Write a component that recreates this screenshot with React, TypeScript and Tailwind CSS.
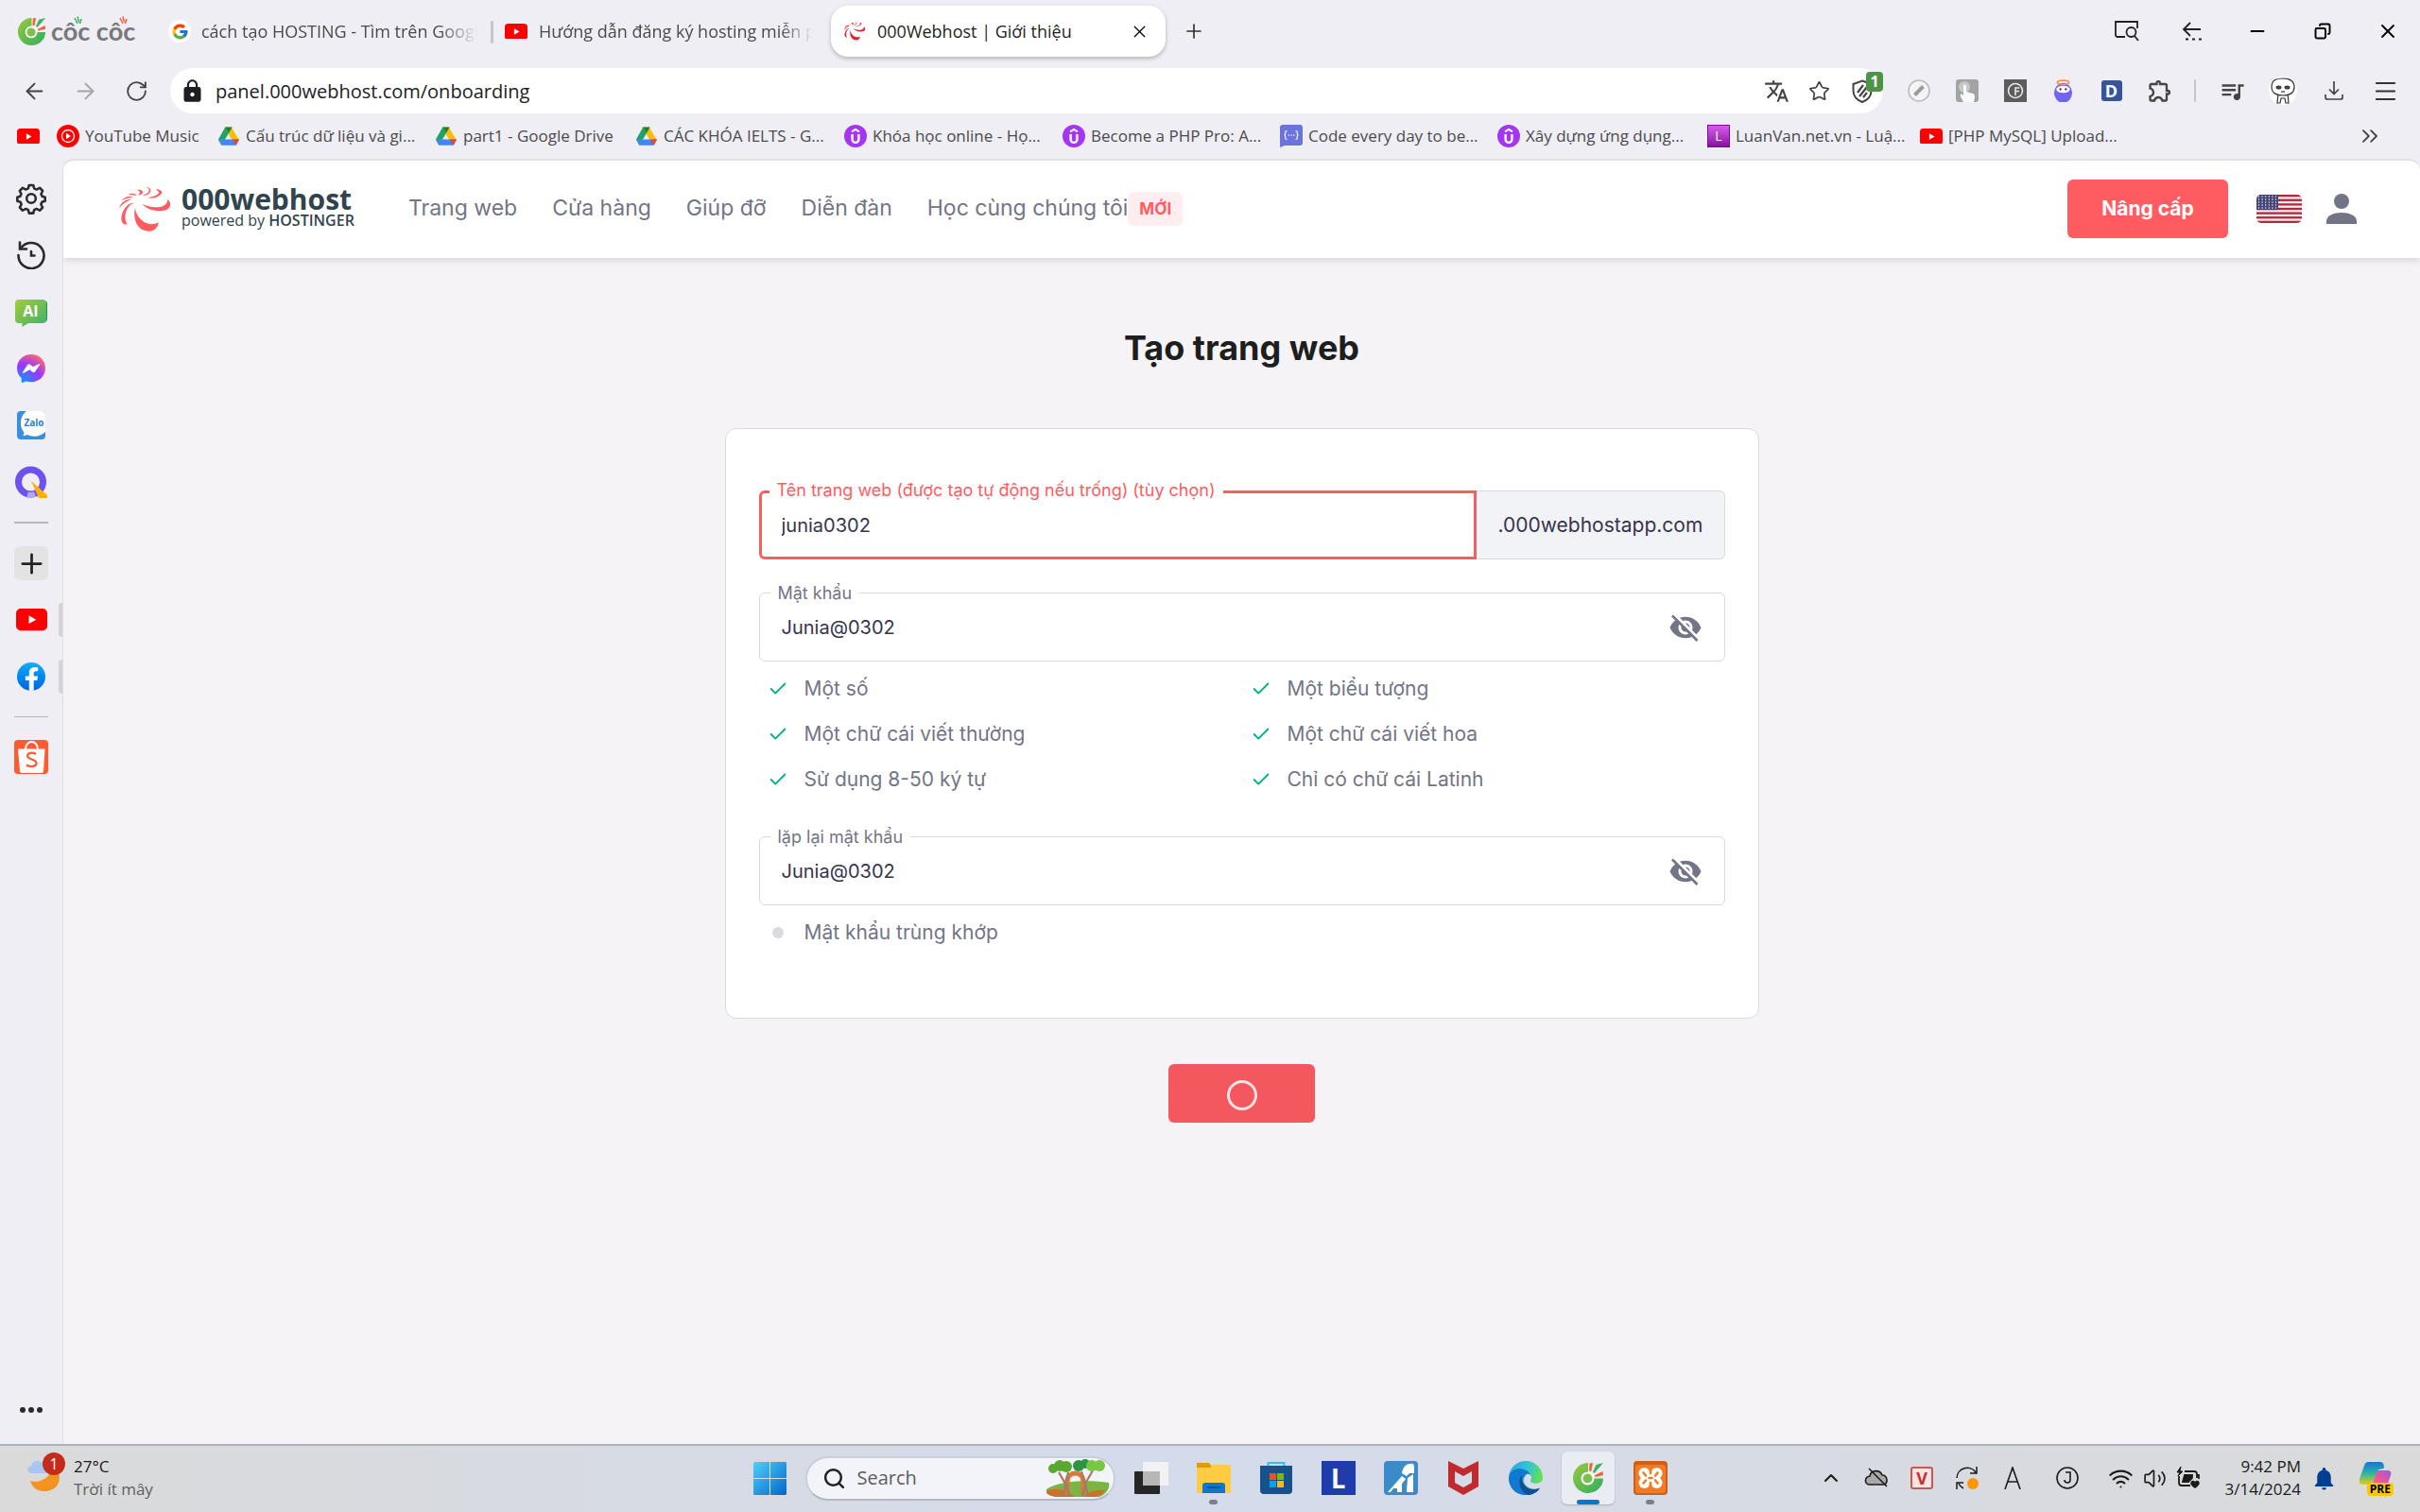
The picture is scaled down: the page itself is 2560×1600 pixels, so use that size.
import React from "react";
import {
  ArrowLeft,
  ArrowRight,
  RotateCw,
  Plus,
  X,
  Minus,
  Star,
  Menu,
  ChevronsRight,
  ChevronUp,
  Search,
  Volume2,
  Wifi,
  Check,
  Copy,
} from "lucide-react";
import { FcGoogle } from "react-icons/fc";
import { FaFacebookF } from "react-icons/fa";
import {
  MdVisibilityOff,
  MdTranslate,
  MdLock,
  MdNotifications,
  MdOutlineQueueMusic,
  MdOutlineExtension,
} from "react-icons/md";

const YouTube = ({ className = "w-6" }: { className?: string }) => (
  <svg viewBox="0 0 34 24" className={className} aria-hidden="true">
    <rect width="34" height="24" rx="5" fill="#ff0000" />
    <path d="M14 7.500v9l8-4.500z" fill="#fff" />
  </svg>
);

const YouTubeMusic = () => (
  <svg viewBox="0 0 24 24" className="size-6 shrink-0" aria-hidden="true">
    <circle cx="12" cy="12" r="12" fill="#ff0000" />
    <circle cx="12" cy="12" r="6.500" fill="none" stroke="#fff" strokeWidth="1.300" />
    <path d="M10 8.700v6.600l5-3.300z" fill="#fff" />
  </svg>
);

const Drive = () => (
  <svg viewBox="0 0 24 24" className="size-6 shrink-0" aria-hidden="true">
    <path d="M8.300 2.500h7.400L24 16.500h-7.400z" fill="#fbbc04" transform="translate(-1 0)" />
    <path d="M8.300 2.500 1 15.500l3.400 6.300 7.600-13z" fill="#1ea362" />
    <path d="M8.300 2.500h7.400L12 8.800z" fill="#188038" />
    <path d="M1 15.500h14.800l-3.600 6.300H4.400z" fill="#4285f4" />
    <path d="M15.600 15.500H23l-3.400 6.300h-8z" fill="#4285f4" />
    <path d="M16 15.500h7l-3.400 6.300z" fill="#ea4335" />
  </svg>
);

const Udemy = () => (
  <svg viewBox="0 0 24 24" className="size-6 shrink-0" aria-hidden="true">
    <circle cx="12" cy="12" r="12" fill="#a435f0" />
    <path d="M8 7.300 12 5l4 2.300" fill="none" stroke="#fff" strokeWidth="2" />
    <path d="M8.600 10v5.500a3.400 3.400 0 0 0 6.800 0V10" fill="none" stroke="#fff" strokeWidth="2.400" />
  </svg>
);

const CodeBubble = () => (
  <svg viewBox="0 0 24 24" className="size-6 shrink-0" aria-hidden="true">
    <path d="M3 0h18a3 3 0 0 1 3 3v16a3 3 0 0 1-3 3H5l-5 2V3a3 3 0 0 1 3-3z" fill="#6a74dc" />
    <path
      d="M7.500 6.500c-2 0-1.700 1-1.700 2.500 0 1-.3 2-1.300 2 1 0 1.300 1 1.300 2 0 1.500-.3 2.500 1.700 2.500M16.500 6.500c2 0 1.700 1 1.700 2.500 0 1 .3 2 1.300 2-1 0-1.300 1-1.300 2 0 1.500.3 2.500-1.700 2.500"
      fill="none"
      stroke="#fff"
      strokeWidth="1.200"
    />
    <path d="M8.700 10.400h1.300v1.300H8.700zM11.400 10.400h1.300v1.300h-1.300zM14 10.400h1.300v1.300H14z" fill="#fff" />
  </svg>
);

const Swirl = ({ className, fill }: { className: string; fill: string }) => (
  <svg viewBox="14 20 178 156" className={className} fill={fill} aria-hidden="true">
    <path d="M70 95C62 130 75 172 118 172C135 172 145 158 148 142C135 152 112 150 98 140C80 127 72 112 70 95Z" />
    <path d="M94 82C110 92 140 96 158 90C170 86 178 78 177 66C190 76 190 96 172 102C145 108 110 105 94 82Z" />
    <path d="M110 60C125 62 145 52 148 46C150 41 144 37 138 33C152 33 160 39 158 45C154 56 130 68 110 60Z" />
    <path d="M94 52C105 52 114 45 116 38C117 32 112 28 107 27C118 26 124 34 120 42C115 52 104 57 94 52Z" />
    <path d="M80 52C88 48 88 40 76 36C88 33 97 39 95 45C92 52 86 54 80 52Z" />
    <path d="M46 53C55 45 70 45 76 55C66 51 56 51 46 53Z" />
    <path d="M24 72C34 58 50 54 64 60C48 62 36 64 24 72Z" />
    <path d="M18 96C22 76 40 66 58 66C40 74 28 82 18 96Z" />
    <path d="M68 78C48 84 38 105 37 125C37 138 42 146 44 149C26 152 22 135 26 118C32 95 48 78 68 78Z" />
  </svg>
);

const CocCocMark = ({ className }: { className: string }) => (
  <svg viewBox="0 0 34 34" className={className} aria-hidden="true">
    <defs>
      <linearGradient id="coccoc" x1="0" y1="0" x2="1" y2="1">
        <stop offset="0" stopColor="#9ac83c" />
        <stop offset="1" stopColor="#2fae62" />
      </linearGradient>
    </defs>
    <path d="M17 1A16 16 0 1 0 33 17.500L23 17.500A6.500 6.500 0 1 1 17 11Z" fill="url(#coccoc)" />
    <circle cx="16.500" cy="17.500" r="7" fill="#fff" />
    <circle cx="16.500" cy="17.500" r="5" fill="#7dc04b" />
    <path d="M18.500 1.500 22 1l-1.700 9-2.300-.5z" fill="#f4623a" />
    <path d="M25.500 3 33 1 23.500 12l-1.500-1.500z" fill="#3cb15f" />
    <path d="m32.500 10 .5 4-8.500 2-.5-2z" fill="#f4623a" />
  </svg>
);

const Rays = ({ className }: { className: string }) => (
  <svg viewBox="0 0 9 9" className={className} fill="none" strokeWidth="1.500" aria-hidden="true">
    <path d="M1 2l3 6M4 .5l1.500 6M8 3 6.500 8" stroke="currentColor" />
  </svg>
);

type Mark = { icon: React.ReactNode; text: string; width: string };

const bookmarks: Mark[] = [
  { icon: <YouTubeMusic />, text: "YouTube Music", width: "w-[170px]" },
  { icon: <Drive />, text: "Cấu trúc dữ liệu và gi...", width: "w-[230px]" },
  { icon: <Drive />, text: "part1 - Google Drive", width: "w-[212px]" },
  { icon: <Drive />, text: "CÁC KHÓA IELTS - G...", width: "w-[221px]" },
  { icon: <Udemy />, text: "Khóa học online - Họ...", width: "w-[231px]" },
  { icon: <Udemy />, text: "Become a PHP Pro: A...", width: "w-[230px]" },
  { icon: <CodeBubble />, text: "Code every day to be...", width: "w-[230px]" },
  { icon: <Udemy />, text: "Xây dựng ứng dụng...", width: "w-[222px]" },
  {
    icon: (
      <span className="flex size-6 shrink-0 items-center justify-center border border-[#7d0b96] bg-linear-to-b from-[#d65bea] to-[#8a0aa3] text-sm text-white">
        L
      </span>
    ),
    text: "LuanVan.net.vn - Luậ...",
    width: "w-[225px]",
  },
  { icon: <YouTube className="w-6 shrink-0" />, text: "[PHP MySQL] Upload...", width: "w-[230px]" },
];

const Slot = ({ className, label, children }: { className: string; label: string; children?: React.ReactNode }) => (
  <button aria-label={label} className={`flex shrink-0 items-center justify-center ${className}`}>
    {children}
  </button>
);

function TabStrip() {
  return (
    <div className="flex h-[72px] items-start text-lg">
      <div className="flex h-[66px] w-[178px] shrink-0 items-center gap-[5px] pl-[18px]">
        <CocCocMark className="size-[31px]" />
        <span className="relative font-['Lato'] text-[27px] leading-8 font-bold whitespace-nowrap text-[#77787b]">
          côc côc
          <Rays className="absolute top-0 left-[24px] size-[9px] text-[#3cb15f]" />
          <Rays className="absolute top-0 right-[8px] size-[9px] text-[#f4623a]" />
        </span>
      </div>
      <div className="flex h-[66px] w-[341px] shrink-0 items-center gap-[11px]">
        <span className="flex size-6 items-center justify-center rounded-full bg-white">
          <FcGoogle size={19} />
        </span>
        <span className="w-[292px] overflow-hidden whitespace-nowrap text-[#4a4a4d] [mask-image:linear-gradient(to_right,black_86%,transparent)]">
          cách tạo HOSTING - Tìm trên Google
        </span>
      </div>
      <div className="mt-[22px] h-6 w-[3px] shrink-0 rounded bg-[#c6c6ca]" />
      <div className="flex h-[66px] w-[357px] shrink-0 items-center gap-3 pl-3">
        <YouTube className="w-6 shrink-0" />
        <span className="w-[290px] overflow-hidden whitespace-nowrap text-[#4a4a4d] [mask-image:linear-gradient(to_right,black_88%,transparent)]">
          Hướng dẫn đăng ký hosting miễn phí
        </span>
      </div>
      <div className="mt-[6px] flex h-[54px] w-[354px] shrink-0 items-center gap-3 rounded-[18px] bg-white pl-[13px] shadow-[0_2px_4px_rgba(0,0,0,0.25)]">
        <Swirl className="w-6" fill="#e0242f" />
        <span className="flex-1 text-[#1f1f22]">000Webhost | Giới thiệu</span>
        <Slot className="w-14" label="Close tab">
          <X size={21} strokeWidth={1.5} />
        </Slot>
      </div>
      <Slot className="h-[66px] w-[60px]" label="New tab">
        <Plus size={24} strokeWidth={1.7} color="#333" />
      </Slot>
      <div className="flex-1" />
      <Slot className="h-[66px] w-[69px]" label="Search tabs">
        <svg viewBox="0 0 26 22" className="w-[26px]" fill="none" stroke="#222" strokeWidth="1.800">
          <path d="M11 17H3a2 2 0 0 1-2-2V1h23v7" />
          <circle cx="17.500" cy="12" r="5" />
          <path d="m21 16 4 5" />
        </svg>
      </Slot>
      <Slot className="h-[66px] w-[69px]" label="Recently closed">
        <svg viewBox="0 0 22 20" className="w-[22px]" fill="none" stroke="#222" strokeWidth="1.800">
          <path d="M20 8H2M9 1 2 8l7 7" />
          <path d="M4 18.500h18" strokeDasharray="3 4" />
        </svg>
      </Slot>
      <Slot className="h-[66px] w-[69px]" label="Minimize">
        <Minus size={22} strokeWidth={2.2} />
      </Slot>
      <Slot className="h-[66px] w-[69px]" label="Restore">
        <Copy size={18} strokeWidth={2.6} className="rotate-90" />
      </Slot>
      <Slot className="h-[66px] w-[69px]" label="Close window">
        <X size={24} strokeWidth={1.8} />
      </Slot>
    </div>
  );
}

function Toolbar() {
  return (
    <div className="flex h-12 items-center pr-[10px] pl-[9px]">
      <Slot className="w-[54px]" label="Back">
        <ArrowLeft size={27} strokeWidth={1.7} color="#444" />
      </Slot>
      <Slot className="w-[54px]" label="Forward">
        <ArrowRight size={27} strokeWidth={1.7} color="#a5a5a8" />
      </Slot>
      <Slot className="w-[54px]" label="Reload">
        <RotateCw size={25} strokeWidth={1.8} color="#444" />
      </Slot>
      <div className="ml-[9px] flex h-12 flex-1 items-center rounded-full bg-white pl-[10px]">
        <MdLock size={27} className="text-[#1f1f22]" aria-hidden="true" />
        <label className="relative ml-[11px] flex h-full flex-1 items-center">
          <span className="sr-only">Address</span>
          <input
            className="h-full w-full bg-transparent text-xl text-[#222] outline-none"
            defaultValue="panel.000webhost.com/onboarding"
          />
        </label>
        <Slot className="w-[45px]" label="Translate">
          <MdTranslate size={27} color="#444" />
        </Slot>
        <Slot className="w-[45px]" label="Bookmark">
          <Star size={23} strokeWidth={1.8} color="#444" />
        </Slot>
        <Slot className="relative w-[45px]" label="Ad block">
          <svg viewBox="0 0 22 25" className="w-[22px]" fill="none" stroke="#444" strokeWidth="2">
            <path d="M11 1.500 20.500 5v7c0 6-4.500 10-9.500 12C6 22 1.500 18 1.500 12V5z" />
            <path d="m6 14 6-8M8 18l8-10M12 19l4-5" strokeWidth="2.200" />
          </svg>
          <span className="absolute -top-2 right-0 flex h-[21px] w-[18px] items-center justify-center rounded bg-[#4c9446] text-base font-bold text-white">
            1
          </span>
        </Slot>
      </div>
      <Slot className="ml-3 w-[51px]" label="Editor extension">
        <svg viewBox="0 0 24 24" className="size-6" fill="none" stroke="#b9b9bc" strokeWidth="1.500">
          <circle cx="12" cy="12" r="11" fill="#f4f4f6" />
          <path d="m7.500 16.500 9-9" stroke="#9b9b9e" strokeWidth="4" />
        </svg>
      </Slot>
      <Slot className="w-[51px]" label="Pointer extension">
        <svg viewBox="0 0 24 24" className="size-6">
          <rect width="24" height="24" rx="3" fill="#a3a3a3" />
          <circle cx="9" cy="8" r="6" fill="#c8c8c8" />
          <path d="M8 6c2-1 3 0 3 2v5l7 2c3 1 2 5 1 9H8c-1-3-4-6-3-8 1-1 2 0 3 1z" fill="#f7fafc" />
        </svg>
      </Slot>
      <Slot className="w-[51px]" label="Full page extension">
        <svg viewBox="0 0 24 24" className="size-6" fill="none" stroke="#e8e8e8" strokeWidth="1.600">
          <rect width="24" height="24" fill="#5c5c5c" stroke="none" />
          <circle cx="12" cy="12" r="7.500" />
          <path d="M16.500 9H12v8M12 12.500h4" />
        </svg>
      </Slot>
      <Slot className="w-[51px]" label="Buddy extension">
        <svg viewBox="0 0 22 26" className="w-[21px]">
          <ellipse cx="11" cy="15" rx="10" ry="11" fill="#7164f0" />
          <ellipse cx="11" cy="11" rx="7.500" ry="4" fill="#fff" />
          <circle cx="8" cy="11" r="1.200" fill="#333" />
          <circle cx="14" cy="11" r="1.200" fill="#333" />
          <ellipse cx="11" cy="3.500" rx="6.500" ry="2.300" fill="none" stroke="#f2913c" strokeWidth="1.800" />
        </svg>
      </Slot>
      <Slot className="w-[51px]" label="Dictionary extension">
        <span className="flex size-[22px] items-center justify-center rounded-[3px] bg-[#34549c] text-lg leading-none font-bold text-white">
          D
        </span>
      </Slot>
      <Slot className="w-[51px]" label="Extensions">
        <MdOutlineExtension size={28} color="#444" />
      </Slot>
      <div className="mx-[11px] h-6 w-0.5 rounded bg-[#c6c6ca]" />
      <Slot className="w-[54px]" label="Media">
        <MdOutlineQueueMusic size={29} color="#444" />
      </Slot>
      <Slot className="w-[54px]" label="Profile">
        <svg viewBox="0 0 30 30" className="size-[30px]" fill="#fff" stroke="#333" strokeWidth="1.200">
          <circle cx="15" cy="15" r="15" stroke="none" />
          <path d="M10 18 9 28h3l1-5h4l1 5h3l-1-10" />
          <path d="M3 11C3 3 9 2 15 2s12 2 12 9-6 9-12 9-12-2-12-9z" />
          <ellipse cx="10.500" cy="11.500" rx="2.400" ry="1.500" fill="#444" />
          <ellipse cx="19.500" cy="11.500" rx="2.400" ry="1.500" fill="#444" />
          <path d="M13 16h4" />
        </svg>
      </Slot>
      <Slot className="w-[54px]" label="Downloads">
        <svg viewBox="0 0 20 20" className="w-5" fill="none" stroke="#444" strokeWidth="1.700">
          <path d="M10 0v13M5 8.500l5 5 5-5M1 14v3a2 2 0 0 0 2 2h14a2 2 0 0 0 2-2v-3" />
        </svg>
      </Slot>
      <Slot className="w-[54px]" label="Menu">
        <Menu size={29} strokeWidth={1.6} color="#333" />
      </Slot>
    </div>
  );
}

function BookmarkBar() {
  return (
    <div className="flex h-12 items-center pl-[18px]">
      <a href="#youtube" aria-label="YouTube" className="mr-[18px] shrink-0">
        <YouTube className="w-6" />
      </a>
      {bookmarks.map((b) => (
        <a
          key={b.text}
          href="#bookmark"
          className={`flex shrink-0 items-center gap-[6px] whitespace-nowrap text-[#4a4a4d] ${b.width}`}
        >
          {b.icon}
          {b.text}
        </a>
      ))}
      <div className="flex-1" />
      <Slot className="mr-[39px]" label="More bookmarks">
        <ChevronsRight size={28} strokeWidth={1.6} color="#444" />
      </Slot>
    </div>
  );
}

const Gear = () => (
  <svg viewBox="0 0 24 24" className="size-[36px]" fill="none" stroke="#2b2b2b" strokeWidth="1.700" strokeLinejoin="round">
    <path d="M10.500 2.600h3l.6 2.300 1.700.8 2.200-1.200 2.100 2.100-1.100 2.200.7 1.700 2.100.6v2.800l-2.200.6-.7 1.700 1.200 2.200-2.100 2.100-2.200-1.200-1.700.8-.6 2.300h-3l-.6-2.300-1.700-.8L6 20.500l-2.100-2.100 1.200-2.200-.7-1.700-2.200-.6v-2.800l2.100-.6.7-1.700-1.100-2.200L6 4.500l2.200 1.200 1.700-.8z" />
    <circle cx="12" cy="12" r="3.200" />
  </svg>
);

function Sidebar() {
  const item = "h-[60px] w-full";
  return (
    <nav aria-label="Side bar" className="flex w-[66px] shrink-0 flex-col items-center pt-3 pb-[6px]">
      <Slot className={item} label="Settings">
        <Gear />
      </Slot>
      <Slot className={item} label="History">
        <svg viewBox="0 0 30 30" className="size-[30px]" fill="none" stroke="#2b2b2b" strokeWidth="2.600" strokeLinecap="round">
          <path d="M1.500 15A13.500 13.500 0 1 0 4.500 7" />
          <path d="M3 1.500V8.500h7" />
          <path d="M15 11v4.500h3.500" />
        </svg>
      </Slot>
      <Slot className={item} label="AI chat">
        <svg viewBox="0 -4 34 34" className="w-[34px]">
          <defs>
            <linearGradient id="ai" x1="0" y1="0" x2="1" y2="1">
              <stop offset="0" stopColor="#a3cd34" />
              <stop offset="1" stopColor="#3fb071" />
            </linearGradient>
          </defs>
          <path d="M5 1h25a4 4 0 0 1 4 4v15a4 4 0 0 1-4 4H14z" fill="#2c8a55" />
          <path d="M4 0h25a4 4 0 0 1 4 4v17a4 4 0 0 1-4 4H14l-6.500 4V25H4a4 4 0 0 1-4-4V4a4 4 0 0 1 4-4z" fill="url(#ai)" />
          <text x="16.500" y="18" fill="#fff" fontSize="16" fontWeight="700" textAnchor="middle" fontFamily="Open Sans">
            AI
          </text>
        </svg>
      </Slot>
      <Slot className={item} label="Messenger">
        <svg viewBox="0 0 30 30" className="size-[30px]">
          <defs>
            <radialGradient id="msg" cx="0.2" cy="1" r="1.100">
              <stop offset="0" stopColor="#0a99ff" />
              <stop offset="0.600" stopColor="#9b36ff" />
              <stop offset="1" stopColor="#ff6a6a" />
            </radialGradient>
          </defs>
          <path d="M15 0C6.500 0 0 6.200 0 14.500c0 4.400 1.800 8.100 4.700 10.700v4.100c0 .6.600.9 1.100.7l3.600-1.600c1.700.5 3.600.8 5.600.8 8.500 0 15-6.300 15-14.700S23.500 0 15 0z" fill="url(#msg)" />
          <path d="m6 19 5-8c.6-.9 1.800-1.100 2.700-.5l3.200 2.500L23.500 10c.4-.3 1 .2.700.7l-5 7.500c-.7.900-1.900 1.100-2.700.5l-3.100-2.400L7 19.800c-.6.300-1.300-.2-1-.8z" fill="#fff" />
        </svg>
      </Slot>
      <Slot className={item} label="Zalo">
        <svg viewBox="0 0 30 30" className="size-[30px]">
          <rect width="30" height="30" rx="4" fill="#3b8edb" />
          <path d="M10 0h16a4 4 0 0 1 4 4v18c-5 5-13 6-19 3-2 1-4 1-5 1 1-1 2-2 1-4C2 16 3 5 10 0z" fill="#fff" />
          <text x="18" y="16" fill="#2b7fd0" fontSize="10" fontWeight="700" textAnchor="middle" fontFamily="Open Sans">
            Zalo
          </text>
        </svg>
      </Slot>
      <Slot className={item} label="Quick search">
        <svg viewBox="0 0 34 34" className="size-[34px]">
          <circle cx="16.500" cy="17" r="13" fill="none" stroke="#6d52f0" strokeWidth="7" />
          <path d="M13 30.500a13.500 13.500 0 0 0 8-.5" fill="none" stroke="#b3a8f7" strokeWidth="6" />
          <path d="M17 16 34 31v3h-9z" fill="#ffb000" />
        </svg>
      </Slot>
      <hr className="my-3 w-9 border-t-2 border-[#b6b6ba]" />
      <Slot className={item} label="Add site">
        <span className="flex size-9 items-center justify-center rounded-md bg-[#e3e3e4]">
          <Plus size={33} strokeWidth={2} color="#222" />
        </span>
      </Slot>
      <div className="relative w-full">
        <Slot className={item} label="YouTube">
          <YouTube className="w-[33px]" />
        </Slot>
        <span className="absolute top-3 right-0 h-9 w-1 rounded-l bg-[#d3d3d4]" />
      </div>
      <div className="relative w-full">
        <Slot className={item} label="Facebook">
          <span className="flex size-[30px] items-end justify-center overflow-hidden rounded-full bg-linear-to-b from-[#18acfe] to-[#0163e0]">
            <FaFacebookF size={25} color="#fff" />
          </span>
        </Slot>
        <span className="absolute top-3 right-0 h-9 w-1 rounded-l bg-[#d3d3d4]" />
      </div>
      <hr className="my-3 w-9 border-t border-[#b6b6ba]" />
      <Slot className={item} label="Shopee">
        <svg viewBox="0 0 36 36" className="size-9" fill="none">
          <rect width="36" height="36" rx="4" fill="#ff5a30" />
          <path d="M4 9.500h28.500L31 33a2 2 0 0 1-2 2H8a2 2 0 0 1-2-2z" fill="#fff" />
          <path d="M12 10c0-5 3-8 6.500-8S25 5 25 10" stroke="#fff" strokeWidth="2" />
          <path d="M23 15c-4-2.500-9-1-9 2 0 4 9.500 3 9.500 7.500 0 3.500-6 5-10.500 2" stroke="#ff5a30" strokeWidth="2.200" />
        </svg>
      </Slot>
      <div className="flex-1" />
      <Slot className={`${item} gap-[3px]`} label="More">
        <span className="size-[6px] rounded-full bg-[#2b2b2b]" />
        <span className="size-[6px] rounded-full bg-[#2b2b2b]" />
        <span className="size-[6px] rounded-full bg-[#2b2b2b]" />
      </Slot>
    </nav>
  );
}

const Flag = () => (
  <svg viewBox="0 0 48 30" className="w-12 rounded-[5px]" aria-hidden="true">
    <rect width="48" height="30" fill="#f3eef0" />
    {[0, 1, 2, 3, 4, 5, 6].map((i) => (
      <rect key={i} y={(i * 60) / 13} width="48" height={30 / 13} fill="#b5283c" />
    ))}
    <rect width="23" height={(30 * 7) / 13} fill="#444477" />
    {[0, 1, 2, 3, 4].map((r) =>
      [0, 1, 2, 3, 4, 5].map((c) => (
        <circle key={`${r}-${c}`} cx={2.5 + c * 3.6} cy={2 + r * 3} r="0.700" fill="#fff" />
      )),
    )}
  </svg>
);

function SiteHeader() {
  return (
    <header className="flex h-[103px] items-center bg-white pr-[67px] pb-[2px] pl-[58px] shadow-[0_2px_8px_rgba(0,0,0,0.14)]">
      <a href="#home" className="flex w-[307px] items-center gap-[10px]">
        <Swirl className="w-[57px]" fill="#ff5c62" />
        <span className="flex flex-col font-['Open_Sans'] text-[#2f444e]">
          <span className="text-[30px] leading-[26px] font-bold">000webhost</span>
          <span className="text-base leading-[18px] whitespace-nowrap">
            powered by <span className="font-semibold">HOSTINGER</span>
          </span>
        </span>
      </a>
      <nav aria-label="Main" className="flex items-center gap-[37px] text-[23px] whitespace-nowrap text-[#727586]">
        <a href="#sites">Trang web</a>
        <a href="#shop">Cửa hàng</a>
        <a href="#help">Giúp đỡ</a>
        <a href="#forum">Diễn đàn</a>
        <a href="#learn" className="flex items-center">
          Học cùng chúng tôi
          <span className="rounded-md bg-[#ffeef0] px-3 text-[17px] leading-9 font-bold text-[#ff5c62]">MỚI</span>
        </a>
      </nav>
      <button className="ml-auto h-[62px] w-[170px] rounded-md bg-[#ff5c62] text-[21px] font-bold text-white">
        Nâng cấp
      </button>
      <button aria-label="Language" className="ml-[30px]">
        <Flag />
      </button>
      <button aria-label="Account" className="ml-[26px]">
        <svg viewBox="0 0 32 32" className="size-8" fill="#727586">
          <circle cx="16" cy="8" r="8" />
          <path d="M0 32v-3c0-6 8-9 16-9s16 3 16 9v3z" />
        </svg>
      </button>
    </header>
  );
}

const labelBase = "absolute -top-[14px] left-[11px] bg-white px-2 text-lg leading-7";

function PasswordField({ id, label }: { id: string; label: string }) {
  return (
    <div className="relative flex h-[73px] items-center rounded-md border border-[#d9dade]">
      <label htmlFor={id} className={`${labelBase} text-[#727586]`}>
        {label}
      </label>
      <input id={id} defaultValue="Junia@0302" className="h-full flex-1 bg-transparent pl-[23px] text-xl text-[#36344d] outline-none" />
      <button type="button" aria-label="Hide password" className="mr-[23px]">
        <MdVisibilityOff size={36} color="#727586" />
      </button>
    </div>
  );
}

const Rule = ({ text, done = true }: { text: string; done?: boolean }) => (
  <li className="flex h-12 items-center pl-[9px]">
    <span className="flex w-[39px]">
      {done ? <Check size={22} strokeWidth={2} color="#00b090" /> : <span className="ml-[5px] size-3 rounded-full bg-[#d9dade]" />}
    </span>
    {text}
  </li>
);

function SiteForm() {
  return (
    <form className="flex flex-col items-center px-6 pt-[68px] font-['Inter']" onSubmit={(e) => e.preventDefault()}>
      <h1 className="mb-[58px] text-4xl leading-[54px] font-bold text-[#1d1e20]">Tạo trang web</h1>
      <div className="w-full max-w-[1094px] rounded-xl border border-[#d9dade] bg-white px-[35px] pt-[65px] pb-[66px]">
        <div className="relative mb-[35px] flex h-[73px]">
          <label htmlFor="site" className={`${labelBase} z-10 text-[#ff5c62]`}>
            Tên trang web (được tạo tự động nếu trống) (tùy chọn)
          </label>
          <input
            id="site"
            defaultValue="junia0302"
            className="min-w-0 flex-1 rounded-l-md border-[3px] border-[#ff5c62] pl-[21px] text-xl text-[#36344d] outline-none"
          />
          <span className="flex w-[263px] items-center rounded-r-md border border-l-0 border-[#d9dade] bg-[#f2f3f6] pl-[23px] text-[21px] text-[#36344d]">
            .000webhostapp.com
          </span>
        </div>
        <PasswordField id="password" label="Mật khẩu" />
        <ul className="mt-[5px] mb-9 grid grid-cols-2 text-[21px] text-[#727586]">
          <Rule text="Một số" />
          <Rule text="Một biểu tượng" />
          <Rule text="Một chữ cái viết thường" />
          <Rule text="Một chữ cái viết hoa" />
          <Rule text="Sử dụng 8-50 ký tự" />
          <Rule text="Chỉ có chữ cái Latinh" />
        </ul>
        <PasswordField id="repeat" label="lặp lại mật khẩu" />
        <ul className="mt-[5px] text-[21px] text-[#727586]">
          <Rule text="Mật khẩu trùng khớp" done={false} />
        </ul>
      </div>
      <button aria-label="Creating" className="mt-12 flex h-[62px] w-[155px] items-center justify-center rounded-md bg-[#f3585f]">
        <span className="mt-1 size-8 rounded-full border-[3px] border-[#ffe4e4]" />
      </button>
    </form>
  );
}

const TaskItem = ({ label, running, children }: { label: string; running?: boolean; children: React.ReactNode }) => (
  <button aria-label={label} className="relative flex h-14 w-[66px] items-center justify-center">
    {children}
    {running && <span className="absolute bottom-0 h-[5px] w-[9px] rounded-full bg-[#7c7f86]" />}
  </button>
);

const SearchArt = () => (
  <svg viewBox="0 0 70 40" className="ml-auto w-[70px]" aria-hidden="true">
    <path d="M2 32C15 22 50 22 68 25c2 6-4 13-10 15H12C6 39 1 36 2 32z" fill="#7db544" />
    <path d="M2 34c8-4 20-3 30 6H12C6 39 1 37 2 34zM42 40c4-6 14-8 22-7-3 4-6 6-10 7z" fill="#c8722c" />
    <path d="M24 38V24c0-12 17-12 17 0v14" fill="none" stroke="#d9793a" strokeWidth="5" />
    <path d="m20 40 2-14-7-12M22 26l3-12M26 40l-3-14M40 40l3-14-4-13M43 26l8-14M46 40l-3-14" stroke="#a57b62" strokeWidth="2.200" fill="none" />
    <g fill="#5aa92f">
      <circle cx="9" cy="10" r="5" />
      <circle cx="16" cy="7" r="6" />
      <circle cx="23" cy="8" r="6" />
    </g>
    <g fill="#2c9442">
      <circle cx="36" cy="7" r="6" />
      <circle cx="43" cy="5" r="5" />
    </g>
    <g fill="#79c743">
      <circle cx="50" cy="7" r="6" />
      <circle cx="58" cy="7" r="6" />
    </g>
  </svg>
);

const Xampp = () => (
  <svg viewBox="0 0 36 36" className="size-9" aria-hidden="true">
    <rect width="36" height="36" rx="4" fill="#c9601d" />
    <rect x="2" y="4" width="32" height="30" rx="3" fill="#f57b22" />
    <g fill="#fff">
      <circle cx="11.500" cy="13" r="6" />
      <circle cx="24.500" cy="13" r="6" />
      <circle cx="11.500" cy="23" r="6" />
      <circle cx="24.500" cy="23" r="6" />
      <rect x="11" y="13" width="14" height="10" />
    </g>
    <g fill="none" stroke="#f57b22" strokeWidth="2.600" strokeLinecap="round">
      <path d="M10.500 12.500 13 15.500M10.500 23.500 13 20.500M25.500 12.500 23 15.500M25.500 23.500 23 20.500" />
      <path d="M18 6v7M18 23v7M16.500 18h3" />
    </g>
  </svg>
);

function Taskbar() {
  return (
    <footer className="grid h-[72px] grid-cols-[1fr_auto_1fr] items-center border-t-2 border-[#aeb1b7] bg-linear-to-r from-[#dadada] via-[#d4dbeb] to-[#dadada] pb-[2px]">
      <div className="flex items-center gap-[9px] pl-[27px]">
        <svg viewBox="0 0 42 46" className="mb-2 h-[46px] w-[42px]" aria-hidden="true">
          <path d="M5 30C14 33 22 28 26 22H35C38 32 32 41 20 41C12 41 7 37 5 30Z" fill="#f39321" />
          <path d="M6 22c-5-1-5-7 0-8 1-6 11-7 13-1 6-1 8 8 2 9z" fill="#a9c6f2" />
          <circle cx="30" cy="12" r="12" fill="#c42b1c" />
          <text x="30" y="18" fill="#fff" fontSize="16" textAnchor="middle" fontFamily="Open Sans">
            1
          </text>
        </svg>
        <p className="leading-6 text-[#1b1b1b]">
          27°C
          <span className="block text-[#5f5f5f]">Trời ít mây</span>
        </p>
      </div>

      <div className="flex items-center">
        <TaskItem label="Start">
          <svg viewBox="0 0 35 35" className="size-[35px]">
            <defs>
              <linearGradient id="win" x1="0" y1="0" x2="1" y2="1">
                <stop offset="0" stopColor="#4fd0ff" />
                <stop offset="1" stopColor="#0067c8" />
              </linearGradient>
            </defs>
            <path d="M1 0h16v17H0V1zM18 0h16l1 1v16H18zM0 18h17v17H1l-1-1zM18 18h17v16l-1 1H18z" fill="url(#win)" />
          </svg>
        </TaskItem>
        <label className="mr-[5px] ml-1 flex h-[47px] w-[328px] items-center rounded-full border-2 border-x-[#c9cedb] border-t-[#c9cedb] border-b-[#b4b8c0] bg-[#f3f4f9] pr-[3px] pl-4">
          <Search size={25} strokeWidth={2.4} color="#222" />
          <input
            aria-label="Search"
            placeholder="Search"
            className="ml-3 w-28 bg-transparent text-xl outline-none placeholder:text-[#5c5c60]"
          />
          <SearchArt />
        </label>
        <TaskItem label="Task view">
          <svg viewBox="0 0 36 35" className="w-9">
            <rect y="10" width="27" height="24" rx="1" fill="#262626" />
            <rect x="9" width="27" height="25" rx="1" fill="#f2f2f2" />
            <path d="M9 10h18v15H9z" fill="#b7b7b7" />
          </svg>
        </TaskItem>
        <TaskItem label="File Explorer" running>
          <svg viewBox="0 0 36 34" className="w-9">
            <path d="M0 1h13l3 4v6H0z" fill="#dd9d09" />
            <path d="M0 6h14l3-3h17a2 2 0 0 1 2 2v28H0z" fill="#ffcb43" />
            <path d="M6 33V25a3 3 0 0 1 3-3h18a3 3 0 0 1 3 3v8z" fill="#0f75cd" />
            <path d="M11 27h14" stroke="#0a4b8c" strokeWidth="1.500" />
          </svg>
        </TaskItem>
        <TaskItem label="Microsoft Store">
          <svg viewBox="0 0 36 36" className="w-9">
            <path d="M9.500 6V2h17v4" fill="none" stroke="#2dc0ee" strokeWidth="2" />
            <path d="M1 5h34v26a4 4 0 0 1-4 4H5a4 4 0 0 1-4-4z" fill="#17528c" />
            <path d="M11 13h7v7h-7z" fill="#f25022" />
            <path d="M19 13h7v7h-7z" fill="#7fba00" />
            <path d="M11 21h7v7h-7z" fill="#00a4ef" />
            <path d="M19 21h7v7h-7z" fill="#ffb900" />
          </svg>
        </TaskItem>
        <TaskItem label="L app">
          <span className="flex size-9 items-center justify-center bg-[#1f3cab] font-['Lato'] text-[28px] leading-none font-black text-white">
            L
          </span>
        </TaskItem>
        <TaskItem label="AI Studio">
          <svg viewBox="0 0 36 36" className="size-9" fill="#fff">
            <rect width="36" height="36" rx="4" fill="#3b8bca" />
            <path d="M4 33 19 16l4 3-4 5v9h-5v-4H10l-3 4zM19 13c1-7 5-11 12-10l1 3v7h-5l-3 3z" />
            <path d="M25 18l6-4v19h-7z" />
          </svg>
        </TaskItem>
        <TaskItem label="McAfee">
          <svg viewBox="0 0 32 36" className="w-8">
            <path d="m0 0 16 8L32 0v27l-16 9L0 27zM7 11v12l9 5 9-5V11l-9 5z" fill="#c12b2e" fillRule="evenodd" />
          </svg>
        </TaskItem>
        <TaskItem label="Edge">
          <svg viewBox="0 0 36 36" className="size-9">
            <defs>
              <linearGradient id="edge" x1="0" y1="0" x2="1" y2="0.300">
                <stop offset="0" stopColor="#2ba4e8" />
                <stop offset="0.600" stopColor="#33c7cf" />
                <stop offset="1" stopColor="#66e04c" />
              </linearGradient>
            </defs>
            <circle cx="18" cy="18" r="18" fill="url(#edge)" />
            <path d="M0 18C1 9 10 6 16 9c6 2 8 6 8 8-5-4-11 1-10 7 1 7 8 11 18 5-4 6-10 8-16 7C6 35 0 27 0 18z" fill="#1079d2" />
            <path d="M14 15c-5 5-3 18 7 21 6-1 11-4 12-8-8 5-20 0-19-13z" fill="#114f97" />
            <path d="M19 14c3-1 5 1 5 3 0 3-3 5 2 6.500 5 1 9-1 10-4v6l-3 3c-8 3-17-1-17-8 0-3 1-5 3-6.500z" fill="#d6dcea" />
          </svg>
        </TaskItem>
        <button
          aria-label="Cốc Cốc"
          className="relative mx-[5px] flex size-14 items-center justify-center rounded-md bg-[#eaecf3] shadow-[0_1px_2px_rgba(0,0,0,0.2)]"
        >
          <CocCocMark className="size-[34px]" />
          <span className="absolute bottom-0 h-[5px] w-6 rounded-full bg-[#0078d4]" />
        </button>
        <TaskItem label="XAMPP" running>
          <Xampp />
        </TaskItem>
      </div>

      <div className="flex items-center justify-end pr-4 text-[#1b1b1b]">
        <Slot className="w-12" label="Hidden icons">
          <ChevronUp size={24} strokeWidth={2} />
        </Slot>
        <Slot className="w-12" label="OneDrive">
          <svg viewBox="0 0 26 22" className="w-[26px]" fill="#a9a9a9" stroke="#1b1b1b" strokeWidth="1.600">
            <path d="M6 18c-6 0-6-8 0-9C7 2 17 2 19 8c6 0 7 10 1 10z" />
            <path d="m5 1 19 19" />
          </svg>
        </Slot>
        <Slot className="w-12" label="Keyboard input">
          <span className="flex size-6 items-center justify-center rounded-[3px] border-2 border-[#cf5555] bg-[#fbe4e4] text-lg leading-none font-bold text-[#c42f2f]">
            V
          </span>
        </Slot>
        <Slot className="w-12" label="Update">
          <svg viewBox="0 0 24 24" className="size-6" fill="none" stroke="#1b1b1b" strokeWidth="1.500">
            <path d="M1 12A11 11 0 0 1 21 6M22 0v7h-7M8 23a11 11 0 0 1-5-5M1 24v-7h7" />
            <circle cx="18" cy="18" r="6" fill="#ff9800" stroke="none" />
          </svg>
        </Slot>
        <Slot className="w-12" label="Language">
          <svg viewBox="0 0 18 24" className="w-[18px]" fill="none" stroke="#1b1b1b" strokeWidth="1.600">
            <path d="M1 24 9 1l8 23M4 16h10" />
          </svg>
        </Slot>
        <Slot className="w-[72px] pr-[5px]" label="Input mode">
          <svg viewBox="0 0 24 24" className="size-6" fill="none" stroke="#1b1b1b" strokeWidth="1.600">
            <circle cx="12" cy="12" r="11" />
            <path d="M10 6h5v8c0 4-6 4-6 0" />
          </svg>
        </Slot>
        <Slot className="w-9" label="Network">
          <Wifi size={27} strokeWidth={1.8} />
        </Slot>
        <Slot className="w-9" label="Volume">
          <Volume2 size={25} strokeWidth={1.6} />
        </Slot>
        <Slot className="w-9" label="Battery">
          <svg viewBox="0 0 26 24" className="w-[26px]" fill="none" stroke="#1b1b1b" strokeWidth="1.800">
            <path d="M9 5h10a3 3 0 0 1 3 3v4M3 10v7a3 3 0 0 0 3 3h9M22 9h2v4" />
            <path d="M9 9h8v3l-4 4H7z" fill="#1b1b1b" />
            <path d="m5 0-4 6h3L2 10l5-5H4z" fill="#1b1b1b" strokeWidth="1" />
            <path d="M20 23c-4-3-6-5-4-7.500 1-1 3-1 4 .5 1-1.500 3-1.500 4-.5 2 2.500 0 4.500-4 7.500z" fill="#1b1b1b" stroke="none" />
          </svg>
        </Slot>
        <p className="w-[101px] text-right leading-6 whitespace-nowrap">
          9:42 PM
          <br />
          3/14/2024
        </p>
        <Slot className="w-12" label="Notifications">
          <MdNotifications size={29} color="#003e92" />
        </Slot>
        <Slot className="relative h-[38px] w-[62px]" label="Copilot">
          <svg viewBox="0 0 34 34" className="size-[34px]">
            <defs>
              <linearGradient id="cpa" x1="0" y1="0" x2="0" y2="1">
                <stop offset="0" stopColor="#1773e0" />
                <stop offset="0.500" stopColor="#2bb5a0" />
                <stop offset="1" stopColor="#ecc81c" />
              </linearGradient>
              <linearGradient id="cpb" x1="1" y1="0" x2="0" y2="1">
                <stop offset="0" stopColor="#9a5be0" />
                <stop offset="0.500" stopColor="#f0559a" />
                <stop offset="1" stopColor="#f58a3c" />
              </linearGradient>
            </defs>
            <path d="M18 9h11c4 0 5 2 4 5l-3 9c-1 3-3 5-6 5H8c5-1 6-4 7-9z" fill="url(#cpb)" />
            <path d="M10 0h12c3 0 4 3 4 6 0 2-5 1-7 3l-5 13c-1 2-3 2-6 2H3c-3 0-4-3-3-6L5 4c1-3 2-4 5-4z" fill="url(#cpa)" />
          </svg>
          <span className="absolute right-3 bottom-0 rounded bg-[#ffc800] px-[3px] text-xs leading-[14px] font-bold text-black">
            PRE
          </span>
        </Slot>
      </div>
    </footer>
  );
}

export default function App() {
  return (
    <div className="flex min-h-screen flex-col bg-[#efeef4] font-['Open_Sans',sans-serif] text-[17px]">
      <TabStrip />
      <Toolbar />
      <BookmarkBar />
      <div className="flex flex-1">
        <Sidebar />
        <main className="flex-1 overflow-hidden rounded-t-xl border-t-2 border-l border-[#e0e0e3] bg-[#f5f3f5] font-['Inter',sans-serif]">
          <SiteHeader />
          <SiteForm />
        </main>
      </div>
      <Taskbar />
    </div>
  );
}
